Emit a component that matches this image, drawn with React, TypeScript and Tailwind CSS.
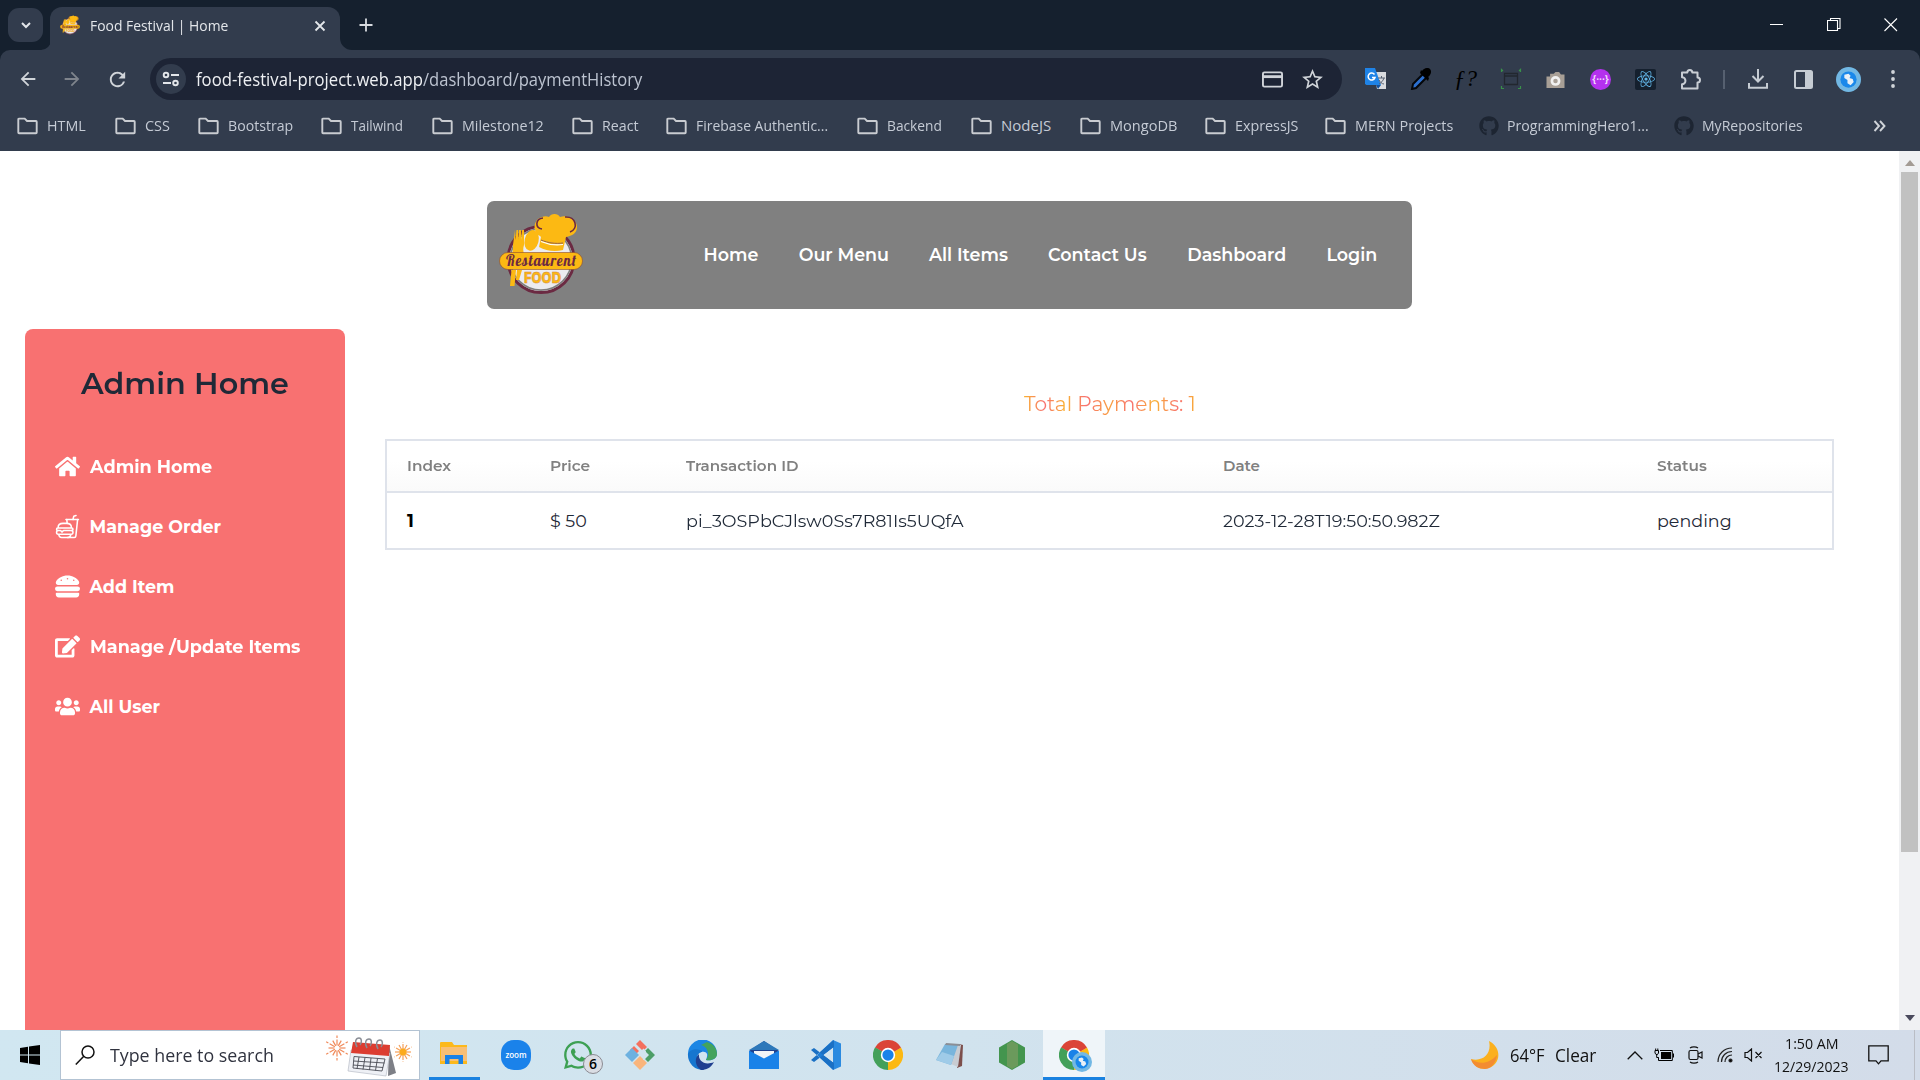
import { useLayoutEffect, useRef, useState, type ReactNode } from "react";
import { FaHome, FaHamburger, FaEdit, FaUsers, FaGithub, FaWhatsapp, FaReact } from "react-icons/fa";
import { IoFastFoodOutline } from "react-icons/io5";
import { MdStarOutline, MdRefresh, MdArrowBack, MdArrowForward } from "react-icons/md";

const UI = "font-['Segoe_UI','Open_Sans',sans-serif]";
const BRAND = "font-['Montserrat','Inter',sans-serif]";

/* Single line of text stretched horizontally to a given width. */
function Fit({ w, className = "", children }: { w: number; className?: string; children: ReactNode }) {
  const ref = useRef<HTMLSpanElement>(null);
  const [scale, setScale] = useState(1);
  useLayoutEffect(() => {
    if (ref.current) setScale(w / ref.current.offsetWidth);
  }, [w]);
  return (
    <span className="block shrink-0 whitespace-nowrap" style={{ width: w }}>
      <span ref={ref} className={`inline-block origin-left align-top ${className}`} style={{ transform: `scaleX(${scale})` }}>
        {children}
      </span>
    </span>
  );
}

function Logo({ className }: { className: string }) {
  return (
    <svg viewBox="0 0 84 82" className={className}>
      <circle cx="42" cy="46.5" r="33" fill="#ececf0" stroke="#6b2a42" strokeWidth="3" />
      <circle cx="42" cy="46.5" r="30.600" fill="none" stroke="#808080" strokeWidth="1.600" />
      <path d="M41 23C34 20 33 7 43 4c2-1 5-1 7 0 2-4 9-4 11 0 8-3 17 3 17 10 0 6-5 9-11 10l-3 13c-8 2-17 1-24-3l2-10z" fill="#fcb913" />
      <path d="M43 16c-7-1-7-10 1-11M66 4c11-1 14 12 5 15" fill="none" stroke="#6b2a42" strokeWidth="1.600" />
      <path d="M42 27c7 3 15 4 22 3" fill="none" stroke="#8a5a50" strokeWidth=".9" />
      <path d="M42 28.500c7 3 15 4 22 3" fill="none" stroke="#fff" strokeWidth="1.200" />
      <ellipse cx="32.500" cy="27.500" rx="7" ry="10.500" transform="rotate(14 33 28)" fill="#fcb913" />
      <path d="M16 17l-2 15c0 5 0 6-1 9h12c-1-3-1-6 0-9l0-15-2 0-1 10v-10h-2l-.500 10-.500-10h-1.500l-1 10z" fill="#fcb913" />
      <path d="M12.500 57h4.500l-1.500 16h-4.500zM18 57h5l-3 10h-3z" fill="#fcb913" />
      <rect x=".5" y="39.500" width="83" height="17" rx="8.500" fill="#fcb913" stroke="#8a4a30" strokeWidth=".6" />
      <text x="7" y="52.500" textLength="70" lengthAdjust="spacing" fill="#6b2a42" fontFamily="Lobster, Liberation Serif" fontSize="14.500">Restaurent</text>
      <text x="25" y="70" textLength="37" lengthAdjust="spacingAndGlyphs" fill="#fcb913" stroke="#d8863a" strokeWidth=".5" fontFamily="Inter" fontWeight="800" fontSize="15">FOOD</text>
    </svg>
  );
}

function Folder() {
  return (
    <svg viewBox="0 0 21 18" className="h-[18px] w-[21px] shrink-0">
      <path d="M1.3 2.5V15.5a.7.7 0 0 0 .7.7H19a.7.7 0 0 0 .7-.7V4.7a.7.7 0 0 0-.7-.7H10L7.7 1.6H2a.8.8 0 0 0-.7.9z" fill="none" stroke="#c9ccd1" strokeWidth="1.9" />
    </svg>
  );
}

function ChromeLogo({ className }: { className: string }) {
  return (
    <svg viewBox="0 0 48 48" className={className}>
      <path d="M24 24L3.2 12A24 24 0 0 1 44.8 12z" fill="#db4437" />
      <path d="M24 24L3.2 12A24 24 0 0 0 24 48z" fill="#43a05a" />
      <path d="M24 24L44.8 12A24 24 0 0 1 24 48z" fill="#fcb913" />
      <path d="M3.2 12L13.6 30 24 24z" fill="#43a05a" />
      <path d="M24 48L34.4 30 24 24z" fill="#fcb913" />
      <path d="M44.8 12H24v12z" fill="#db4437" />
      <circle cx="24" cy="24" r="11.5" fill="#fff" />
      <circle cx="24" cy="24" r="9" fill="#1a82e8" />
    </svg>
  );
}

const bookmarks: [string, number, number, boolean?][] = [
  ["HTML", 98, 39],
  ["CSS", 83, 25],
  ["Bootstrap", 123, 65],
  ["Tailwind", 111, 52],
  ["Milestone12", 140, 82],
  ["React", 94, 37],
  ["Firebase Authentic...", 191, 132],
  ["Backend", 114, 55],
  ["NodeJS", 109, 50],
  ["MongoDB", 125, 67],
  ["ExpressJS", 120, 63],
  ["MERN Projects", 154, 98],
  ["ProgrammingHero1...", 195, 142, true],
  ["MyRepositories", 182, 101, true],
];

function TabStrip() {
  return (
    <div className="flex h-[50px] items-start bg-[#15202e]">
      <div className="mt-2 ml-2 flex h-[34px] w-[35px] items-center justify-center rounded-[11px] bg-[#323c4d]">
        <svg viewBox="0 0 12 12" className="h-3 w-3"><path d="M2 4l4 4 4-4" fill="none" stroke="#e3e6ea" strokeWidth="2" /></svg>
      </div>
      <svg viewBox="0 0 10 10" className="-ml-[2px] h-[10px] w-[10px] shrink-0 self-end"><path d="M10 0v10H0A10 10 0 0 0 10 0" fill="#323c4d" /></svg>
      <div className="mt-[7px] -ml-px flex h-[43px] w-[290px] items-center rounded-t-[12px] bg-[#323c4d] pb-1 pl-[10px]">
        <Logo className="mb-1 h-5 w-5" />
        <div className="w-[10px]" />
        <Fit w={138} className="text-[15px] leading-5 text-[#e3e6ea]">Food Festival | Home</Fit>
        <svg viewBox="0 0 12 12" className="mb-[2px] ml-[86px] h-3 w-3"><path d="M1.5 1.5l9 9m0-9l-9 9" stroke="#e3e6ea" strokeWidth="1.8" /></svg>
      </div>
      <svg viewBox="0 0 12 12" className="h-3 w-3 shrink-0 self-end"><path d="M0 0v12h12A12 12 0 0 1 0 0" fill="#323c4d" /></svg>
      <svg viewBox="0 0 14 14" className="mt-[18px] ml-[7px] h-[14px] w-[14px]"><path d="M7 .5v13M.5 7h13" stroke="#d8dbe0" strokeWidth="1.8" /></svg>
      <div className="mt-[17px] mr-[22px] ml-auto flex gap-[43px]">
        <svg viewBox="0 0 14 15" className="h-[15px] w-[14px]"><path d="M0 7.5h13" stroke="#fff" /></svg>
        <svg viewBox="0 0 14 15" className="h-[15px] w-[14px]"><path d="M.5 3.5h10v10H.5zM3.500 3.500v-2h9.500v10h-2" fill="none" stroke="#fff" strokeWidth="1.1" /></svg>
        <svg viewBox="0 0 14 15" className="h-[15px] w-[14px]"><path d="M.5 1.500l12.500 12.500m0-12.500L.5 14" stroke="#fff" strokeWidth="1.100" /></svg>
      </div>
    </div>
  );
}

function Cell({ children, className = "w-[45px]" }: { children: ReactNode; className?: string }) {
  return <div className={`flex shrink-0 items-center justify-center ${className}`}>{children}</div>;
}

function Toolbar() {
  return (
    <div className="flex h-[58px] items-center">
      <MdArrowBack className="ml-[17px] size-[22px] text-[#d0d4d9]" />
      <MdArrowForward className="ml-[22px] size-[22px] text-[#7f848c]" />
      <MdRefresh className="ml-[23px] size-[23px] text-[#d0d4d9]" />
      <div className="ml-[21px] flex h-[42px] w-[1192px] items-center rounded-full bg-[#1d2435] pl-[6px]">
        <div className="flex size-[30px] items-center justify-center rounded-full bg-[#323c4d]">
          <svg viewBox="0 0 18 16" className="h-4 w-[18px]" fill="none" stroke="#e3e6ea" strokeWidth="1.900">
            <circle cx="4" cy="4" r="2.300" /><path d="M9 4h8M1 12h8" /><circle cx="13.500" cy="12" r="2.300" />
          </svg>
        </div>
        <div className="ml-[10px] flex text-[18px] leading-6">
          <Fit w={227} className="text-[#eef0f3]">food-festival-project.web.app</Fit>
          <Fit w={219} className="text-[#bcc3d0]">/dashboard/paymentHistory</Fit>
        </div>
        <svg viewBox="0 0 22 17" className="ml-auto h-[17px] w-[21px]"><rect x="1" y="1" width="20" height="15" rx="1.500" fill="none" stroke="#d0d4d9" strokeWidth="2" /><path d="M1 5.500h20" stroke="#d0d4d9" strokeWidth="3" /></svg>
        <MdStarOutline className="mr-[17px] ml-[17px] size-[25px] text-[#d0d4d9]" />
      </div>
      <div className="ml-[11px] flex flex-1 items-center">
        <Cell>
          <svg viewBox="0 0 22 22" className="size-[22px]">
            <path d="M9 4h12v17H12z" fill="#d9dbdf" /><path d="M0 0h10l6 17H1.500L0 16z" fill="#1f83e6" />
            <path d="M9.500 6.500a3.500 3.500 0 1 0 .5 3H7" fill="none" stroke="#fff" strokeWidth="1.500" />
            <path d="M13 10h7m-3.500-2v2m2.500 0c-1 3-3 5-5 6m0-4c1 2 3 4 5 4" fill="none" stroke="#596273" /><path d="M11 17h5l-3 4z" fill="#12519c" />
          </svg>
        </Cell>
        <Cell>
          <svg viewBox="0 0 22 22" className="size-[22px]">
            <path d="M13 6L3 16l-1 5 4-1 11-11z" fill="#2c6fce" stroke="#05070a" strokeWidth="2" /><path d="M10 5l8 8 1-3-1-1c3-2 4-6 2-8s-6-1-8 2l-1-1z" fill="#000" />
          </svg>
        </Cell>
        <Cell><span className="font-['Liberation_Serif',serif] text-[23px] leading-6 text-black italic">ƒ?</span></Cell>
        <Cell>
          <svg viewBox="0 0 22 22" className="size-[22px]" fill="none">
            <path d="M4.500 5.500h13v11h-13zM4 8h14" stroke="#22272f" strokeWidth="1.300" /><path d="M1.500 4V1.500L3 3M19 3l1.500-1.500V4M1.500 18v2.500H4m14 0h2.500V18" stroke="#39904a" strokeWidth="1.200" />
          </svg>
        </Cell>
        <Cell>
          <svg viewBox="0 0 20 20" className="mt-[2px] h-[18px] w-[19px]"><path d="M0 6h4V3h4l2-2h4l2 3h4v15H0z" fill="#a89f96" /><circle cx="10" cy="11" r="5.500" fill="#f1f1f1" /><circle cx="10" cy="11" r="2.500" fill="#a89f96" /></svg>
        </Cell>
        <Cell>
          <div className="flex size-[21px] items-center justify-center rounded-full bg-[#b431ee] text-[10px] leading-none font-bold text-[#f0d9fb]">{"{···}"}</div>
        </Cell>
        <Cell><div className="flex size-[21px] items-center justify-center rounded-[2px] bg-[#15202e]"><FaReact className="size-[18px] text-[#61b4e6]" /></div></Cell>
        <Cell>
          <svg viewBox="0 0 22 22" className="size-[22px]"><path d="M2 4.500h5.300a2.500 2.500 0 0 1 5 0H17.500v5a2.500 2.500 0 0 1 0 5V20.500H2v-4.300a3.300 3.300 0 0 0 0-6.900z" fill="none" stroke="#c9ced4" strokeWidth="2" strokeLinejoin="round" /></svg>
        </Cell>
        <div className="ml-[10px] h-[19px] w-[2px] bg-[#566070]" />
        <Cell className="ml-[10px] w-[46px]">
          <svg viewBox="0 0 20 20" className="size-5"><path d="M10 0v12M4.500 7l5.500 5.500L15.500 7M1 14v4.800h18V14" fill="none" stroke="#c6ccd3" strokeWidth="2" /></svg>
        </Cell>
        <Cell className="w-[44px]">
          <svg viewBox="0 0 19 19" className="size-[19px]"><rect x="1" y="1" width="17" height="17" rx="1.500" fill="none" stroke="#c6ccd3" strokeWidth="2" /><path d="M11 1h7v17h-7z" fill="#c6ccd3" /></svg>
        </Cell>
        <Cell className="w-[46px]"><ProfileDisc className="size-[25px]" /></Cell>
        <Cell className="w-[43px]">
          <svg viewBox="0 0 4 18" className="h-[18px] w-1" fill="#d0d4d9"><circle cx="2" cy="2" r="1.900" /><circle cx="2" cy="9" r="1.900" /><circle cx="2" cy="16" r="1.900" /></svg>
        </Cell>
      </div>
    </div>
  );
}

function ProfileDisc({ className }: { className: string }) {
  return (
    <svg viewBox="0 0 24 24" className={className}>
      <circle cx="12" cy="12" r="12" fill="#72b8e4" /><circle cx="12" cy="12" r="7.800" fill="#1a88ea" />
      <path d="M8 7.500l4-1 2 2-1 2 3 1 1 3-3 3-3-2 0-3-3-2z" fill="#e8f0f7" />
    </svg>
  );
}

function Bookmarks() {
  return (
    <div className="flex h-[43px] items-center pb-[7px] pl-[17px]">
      {bookmarks.map(([label, width, textWidth, gh]) => (
        <div key={label} className="flex shrink-0 items-center" style={{ width }}>
          {gh ? <FaGithub className="size-[20px] text-[#1d2532]" /> : <Folder />}
          <div className={gh ? "w-2" : "w-[9px]"} />
          <Fit w={textWidth} className="pt-px text-[15px] leading-5 text-[#c5cbd5]">{label}</Fit>
        </div>
      ))}
      <svg viewBox="0 0 13 12" className="ml-[17px] h-3 w-[13px]"><path d="M1.500 1l4.500 5-4.500 5M7 1l4.500 5L7 11" fill="none" stroke="#d0d4d9" strokeWidth="1.900" /></svg>
    </div>
  );
}

const links: [string, number][] = [["Home", 55], ["Our Menu", 90], ["All Items", 79], ["Contact Us", 99], ["Dashboard", 99], ["Login", 51]];

const side: [ReactNode, string, number][] = [
  [<FaHome className="size-[25px]" />, "Admin Home", 122],
  [<IoFastFoodOutline className="size-[25px]" />, "Manage Order", 132],
  [<FaHamburger className="size-[25px]" />, "Add Item", 85],
  [<FaEdit className="size-[25px]" />, "Manage /Update Items", 210],
  [<FaUsers className="size-[25px]" />, "All User", 71],
];

const headers: [string, number][] = [["Index", 44], ["Price", 40], ["Transaction ID", 113], ["Date", 37], ["Status", 50]];
const row: [string, number][] = [["1", 7], ["$ 50", 37], ["pi_3OSPbCJlsw0Ss7R81Is5UQfA", 278], ["2023-12-28T19:50:50.982Z", 217], ["pending", 75]];

function Page() {
  return (
    <div className={`flex h-[879px] bg-white ${BRAND}`}>
      <div className="flex flex-1 flex-col overflow-hidden pt-[50px]">
        <nav className="ml-[487px] flex h-[108px] w-[925px] shrink-0 items-center rounded-[7px] bg-[#808080] pl-3">
          <Logo className="mb-[2px] h-[82px] w-[84px]" />
          <div className="ml-[120.5px] flex gap-[40.2px] text-[17.5px] leading-6 font-semibold text-white">
            {links.map(([t, w]) => <Fit key={t} w={w}>{t}</Fit>)}
          </div>
        </nav>
        <div className="mt-5 flex flex-1">
          <aside className="ml-[25px] w-[320px] shrink-0 rounded-t-[8px] bg-[#f87171]">
            <div className="mt-[35px] flex justify-center text-[30px] leading-10 font-semibold text-[#1f2937]">
              <Fit w={208}>Admin Home</Fit>
            </div>
            <ul className="mt-[48px] pl-[30px] text-white">
              {side.map(([icon, t, w]) => (
                <li key={t} className="mb-[30px] flex h-[30px] items-center gap-[9.500px] text-[17.5px] leading-6 font-bold">
                  <span className="mb-px">{icon}</span>
                  <Fit w={w}>{t}</Fit>
                </li>
              ))}
            </ul>
          </aside>
          <main className="ml-10 w-[1449px]">
            <div className="mt-[60px] flex justify-center text-[20px] leading-[30px]">
              <Fit w={172} className="bg-[linear-gradient(90deg,#f9b233,#f87171_12%,#f9b233_24%,#f87171_36%,#f9a040_50%,#f87171_62%,#f9b233_76%,#f87171_90%,#f9b233)] bg-clip-text text-transparent">Total Payments: 1</Fit>
            </div>
            <div className="mt-5 border-2 border-[#dfe3eb]">
              <div className="grid h-[52px] grid-cols-[143px_135.500px_537.500px_434px_1fr] items-center border-b-2 border-[#dfe3eb] bg-gradient-to-b from-white from-40% to-[#fafafa] pt-px pl-5 text-[15px] font-semibold text-[#808080]">
                {headers.map(([t, w]) => <Fit key={t} w={w}>{t}</Fit>)}
              </div>
              <div className="grid h-[55px] grid-cols-[143px_135.500px_537.500px_434px_1fr] items-center pt-[2px] pl-5 text-[17.5px] text-[#1f2937]">
                {row.map(([t, w], i) => <Fit key={t} w={w} className={i === 0 ? "font-bold text-black" : ""}>{t}</Fit>)}
              </div>
            </div>
          </main>
        </div>
      </div>
      <div className="flex w-[21px] flex-col items-center bg-[#f0f1f3]">
        <svg viewBox="0 0 10 6" className="mt-[9px] h-[6px] w-[10px]"><path d="M0 6l5-6 5 6z" fill="#a39b94" /></svg>
        <div className="mt-[6px] h-[680px] w-[17px] bg-[#c1c1c1]" />
        <svg viewBox="0 0 10 6" className="mt-auto mb-[9px] h-[6px] w-[10px]"><path d="M0 0l5 6 5-6z" fill="#4a4a5c" /></svg>
      </div>
    </div>
  );
}

const rays = Array.from({ length: 12 }, (_, i) => i * 30);

function Burst({ cx, cy, r, color }: { cx: number; cy: number; r: number; color: string }) {
  return (
    <g stroke={color} strokeWidth="1.200">
      {rays.map((a, i) => (
        <path key={a} d={`M${cx} ${cy - r * 0.2}V${cy - r * (i % 2 ? 0.8 : 1)}`} strokeDasharray="6 1.500" transform={`rotate(${a} ${cx} ${cy})`} />
      ))}
    </g>
  );
}

function Calendar() {
  return (
    <svg viewBox="0 0 88 44" className="h-[44px] w-[88px]">
      <Burst cx={12} cy={15} r={12.5} color="#f08a5a" />
      <Burst cx={78} cy={19} r={10} color="#f5a05a" /><circle cx="78" cy="19" r="3.500" fill="#fcab1c" />
      <path d="M64 12l7 28-8 3z" fill="#7d7f86" />
      <path d="M26 17l39 3-4 23-38-5z" fill="#eef0f5" stroke="#aeb4bf" strokeWidth=".6" />
      <path d="M28 9l37 3-1 11-38-3z" fill="#dc3d31" />
      <path d="M29 23.500l31 2.500-3 12-29-3zM34 24l-2 12m8-11.500l-2 12m8-11.500l-1.500 12m8-11.500l-2 12M28.500 28l31 2M28 32l30 2.500" fill="none" stroke="#4a4c55" strokeWidth=".9" />
      <path d="M32 14c-3-5-1-9 2-9s3 5 1 7M42 15c-3-5-1-9 2-9s3 5 1 7M53 16c-3-5-1-9 2-9s3 5 1 7" fill="none" stroke="#8a8d95" strokeWidth="1.500" />
    </svg>
  );
}

const apps: ReactNode[] = [
  <svg viewBox="0 0 28 24" className="mb-1 h-6 w-7"><path d="M0 2a1 1 0 0 1 1-1h11l2 3h13v19H0z" fill="#fcb91c" /><path d="M1 6h26v14H1z" fill="#f9bf75" /><path d="M5 23V14h18v9h-4.500v-5h-9v5z" fill="#1a82e8" /></svg>,
  <div className="flex size-[30px] items-center justify-center rounded-[13px] bg-[#1a82ea] text-[8px] leading-none font-semibold text-white">zoom</div>,
  <div className="relative"><FaWhatsapp className="size-[32px] text-[#3da053]" /><div className="absolute top-[15px] left-[21px] flex size-[20px] items-center justify-center rounded-full border border-[#8b8b92] bg-[#dadde4] text-[14px] leading-none font-semibold text-black">6</div></div>,
  <svg viewBox="0 0 30 30" className="size-[30px]"><path d="M15 0l7 7-4 4-7-7zM9 6l5 5-3 3-6-4z" fill="#f4705e" /><path d="M7 8l7 7-7 7-7-7z" fill="#6db1e0" /><path d="M23 8l7 7-7 7-3-3 4-4-4-4z" fill="#4c9e67" /><path d="M15 16l7 7-7 7-7-7z" fill="#f9b57c" /><path d="M19 9l-4 6M19 20l1-9" stroke="#d1e4ef" strokeWidth="2" /></svg>,
  <svg viewBox="0 0 30 30" className="size-[30px]"><path d="M1 15A14.500 14.500 0 0 1 30 13c0 6-5 8-11 7 1-2 0-8-5-9C8 10 2 13 1 18z" fill="#1b86e4" /><path d="M20 2c7 2 10 7 10 12 0 5-6 7-11 6 0-1 2-2 2-6 0-5-3-8-7-9z" fill="#43a35d" /><path d="M1 14C3 8 13 8 16 12c-7 0-8 9-1 15l2 3A15 15 0 0 1 1 14z" fill="#1676cf" /><path d="M12 14c-1 7 6 12 15 8-3 6-8 8-13 8-6-4-7-12-2-16z" fill="#203f90" /><path d="M15 12c4-1 7 2 4 7-4 1-7-3-4-7z" fill="#d1e4ef" /></svg>,
  <svg viewBox="0 0 30 28" className="h-7 w-[30px]"><path d="M0 10L15 0l15 10v4H0z" fill="#20428f" /><path d="M0 9L15 0l15 9z" fill="#2d78ba" /><path d="M5 10h20v8H5z" fill="#f2f4f7" /><path d="M0 9.500l15 8 15-8V28H0z" fill="#1a82e8" /></svg>,
  <svg viewBox="0 0 30 30" className="size-[30px]"><path d="M22 0l8 3.500v23L22 30z" fill="#2a8ae0" /><path d="M22 0L6 15l16 15v-7L12 15l10-8z" fill="#1c7cd6" /><path d="M0 10l3-2 20 15v7zM0 20l3 2L23 7V0z" fill="#1a70c4" /><path d="M22 8v14l-9-7z" fill="#d3e5f0" /></svg>,
  <ChromeLogo className="size-[30px]" />,
  <svg viewBox="0 0 28 28" className="size-7"><path d="M23 3l4 1-1 21-5 2z" fill="#7c4f4c" /><path d="M11 3l14 1-3 22-7-3z" fill="#c8ccd2" /><path d="M9 3l13 1-7 20L0 19z" fill="#79b5dc" /><path d="M10 2l14 1v2L9 4z" fill="#8b8f96" /><path d="M6 11l12 4-3 9L0 19z" fill="#9fcbe8" /></svg>,
  <svg viewBox="0 0 26 30" className="h-[30px] w-[26px]"><path d="M13 0l13 7.500v15L13 30 0 22.500v-15z" fill="#43954e" /><path d="M13 1l6 3.500v21L13 29 8 26V4z" fill="#6b9a5c" /></svg>,
  <div className="relative"><ChromeLogo className="size-[30px]" /><ProfileDisc className="absolute top-[12px] left-[13px] size-[20px]" /></div>,
];

function Taskbar() {
  return (
    <div className="flex h-[50px] bg-gradient-to-r from-[#d1e7f1] via-[#d1e3ee] to-[#d3dce9]">
      <div className="flex w-[60px] items-center justify-center">
        <svg viewBox="0 0 20 20" className="size-5"><path d="M0 3l8-1.200v7.700H0zM9 1.600L20 0v9.500H9zM0 10.500h8v7.700L0 17zM9 10.500h11V20L9 18.400z" fill="#000" /></svg>
      </div>
      <div className="flex w-[360px] items-center border border-[#b3c3d3] bg-white pl-[14px]">
        <svg viewBox="0 0 20 20" className="size-5"><circle cx="13" cy="7" r="6" fill="none" stroke="#111" strokeWidth="1.500" /><path d="M8.800 11.200L.8 19.500" stroke="#111" strokeWidth="1.500" /></svg>
        <Fit w={164} className="ml-[15px] text-[19px] leading-6 text-[#30333f]">Type here to search</Fit>
        <div className="mr-[6px] ml-auto"><Calendar /></div>
      </div>
      <div className="ml-[3px] flex">
        {apps.map((a, i) => (
          <div key={i} className={`flex h-[50px] w-[62px] flex-col items-center ${i === 10 ? "bg-[#eff5f9]" : ""}`}>
            <div className="flex flex-1 items-center justify-center pt-[3px]">{a}</div>
            {i === 0 && <div className="h-[3px] w-[51px] bg-[#1a82e0]" />}
            {i === 10 && <div className="h-[3px] w-[62px] bg-[#1a82e0]" />}
            {i > 0 && i < 10 && <div className="h-[3px]" />}
          </div>
        ))}
      </div>
      <div className="ml-auto flex items-center text-[#111]">
        <svg viewBox="0 0 28 28" className="mr-[11px] size-7"><path d="M18 0c14 7 12 26-4 28C8 28 2 25 0 18c12 3 21-5 18-18z" fill="#fbb01e" /><path d="M0 18c8 6 18 5 26-4-1 8-6 14-12 14C8 28 2 25 0 18z" fill="#f0803a" opacity=".75" /></svg>
        <Fit w={35} className="text-[18px] leading-6">64°F</Fit>
        <div className="w-[10px]" />
        <Fit w={41} className="text-[18px] leading-6">Clear</Fit>
        <svg viewBox="0 0 16 9" className="ml-[31px] h-[9px] w-4"><path d="M.7 8.300L8 1l7.300 7.300" fill="none" stroke="#111" strokeWidth="1.300" /></svg>
        <svg viewBox="0 0 20 14" className="ml-[11px] h-[14px] w-5"><path d="M7 4h10v7H7z" fill="#000" /><path d="M6 2.500h12.300v10H4.500V9.500M19.500 5.500v4" stroke="#000" fill="none" /><path d="M1 2.500h3.500v2.500L3.500 6.500H2L1 5zM1.700.5v2M3.800.5v2M2.700 6.500v3h2" stroke="#000" fill="none" /></svg>
        <svg viewBox="0 0 15 18" className="ml-[14px] h-[18px] w-[15px]" fill="none" stroke="#111" strokeWidth="1.200"><rect x="1" y="4.500" width="9" height="9" rx="1.500" /><path d="M10 8l4-2v6l-4-2M2 2c2-1.500 6-1.500 8 0M2 16c2 1.500 6 1.500 8 0" /></svg>
        <svg viewBox="0 0 16 16" className="ml-[14px] size-4" fill="none" stroke="#222" strokeWidth="1.200"><path d="M1 15C1 7 7 1 15 1M4.500 15C4.500 9 9 4.500 15 4.500M8 15c0-4 3-7 7-7" /><circle cx="13.500" cy="13.500" r="1.500" fill="#000" /></svg>
        <svg viewBox="0 0 19 14" className="ml-[11px] h-[14px] w-[19px]" fill="none" stroke="#111" strokeWidth="1.200"><path d="M1 4.500h2.500L7.500 1v12l-4-3.500H1zM11.500 4l6 6m0-6l-6 6" /></svg>
        <div className="ml-[11px] flex w-[75px] flex-col items-center text-[15px] leading-[23px]">
          <Fit w={54}>1:50 AM</Fit>
          <Fit w={75}>12/29/2023</Fit>
        </div>
        <svg viewBox="0 0 21 20" className="ml-[19px] h-5 w-[21px]"><path d="M.8.800h19.400v15H13l-2.500 3-2.500-3H.8z" fill="none" stroke="#111" strokeWidth="1.300" /></svg>
        <div className="mr-[5px] ml-[25px] h-[50px] w-px bg-[#b9bdc5]" />
      </div>
    </div>
  );
}

export default function App() {
  return (
    <div className={`h-[1080px] w-[1920px] overflow-hidden ${UI}`}>
      <TabStrip />
      <div className="h-[101px] bg-[#15202e]">
        <div className="h-[101px] rounded-t-[10px] bg-[#323c4d]">
          <Toolbar />
          <Bookmarks />
        </div>
      </div>
      <Page />
      <Taskbar />
    </div>
  );
}
